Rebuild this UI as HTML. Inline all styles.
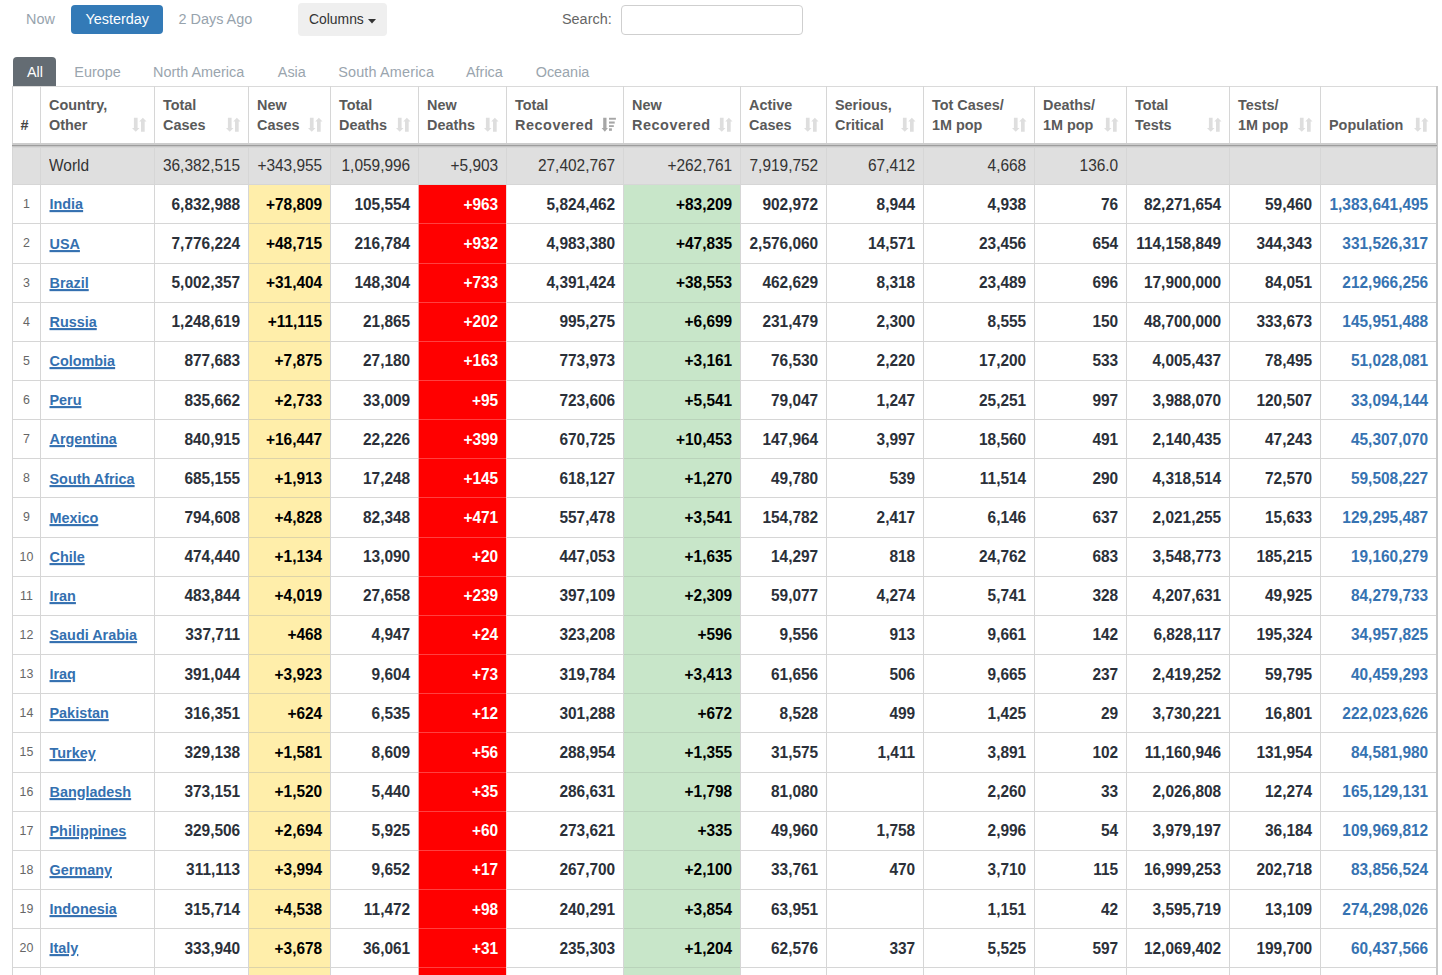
<!DOCTYPE html>
<html><head><meta charset="utf-8"><title>Coronavirus table</title>
<style>
html,body{margin:0;padding:0;background:#fff;}
body{width:1442px;height:975px;overflow:hidden;position:relative;font-family:"Liberation Sans",sans-serif;color:#333;}
.a{position:absolute;white-space:nowrap;line-height:1;}
.t{font-size:14.42px;}
.h{font-size:14.42px;font-weight:bold;color:#5a5a5a;}
.c{font-size:15.45px;font-weight:bold;color:#2b3039;transform:scaleY(1.1);transform-origin:0 85%;}
.w{font-size:15.45px;color:#333;transform:scaleY(1.1);transform-origin:0 85%;}
.n{font-size:12.4px;color:#666;}
.lk{transform:scaleY(1.06) !important;color:#3470b0;font-size:14.42px;text-decoration:underline;text-decoration-thickness:2px;text-underline-offset:1px;}
.pop{color:#3673b2;}
.k{color:#000;}
.wh{color:#fff;}
.ln{position:absolute;background:#d6d6d6;}
.bg{position:absolute;}
</style></head><body>

<div class="a t" style="left:26px;top:12.4px;color:#97a3ad;">Now</div>
<div class="bg" style="left:71px;top:5px;width:92px;height:29px;background:#337ab7;border-radius:4px;"></div>
<div class="a t" style="left:85.5px;top:12.4px;color:#fff;">Yesterday</div>
<div class="a t" style="left:178.5px;top:12.4px;color:#97a3ad;">2 Days Ago</div>
<div class="bg" style="left:298px;top:3px;width:88.5px;height:33px;background:#efefef;border-radius:4px;"></div>
<div class="a" style="left:309px;top:13.1px;color:#333;font-size:13.9px;">Columns</div>
<svg class="bg" style="left:368px;top:18.5px" width="8" height="5" viewBox="0 0 8 5"><path d="M0 0H8L4 4.5Z" fill="#333"/></svg>
<div class="a t" style="left:562px;top:11.8px;color:#666;">Search:</div>
<div class="bg" style="left:621px;top:5px;width:180px;height:28px;border:1px solid #cfcfcf;border-radius:4px;"></div>
<div class="bg" style="left:13px;top:57px;width:43px;height:30px;background:#646c73;border-radius:4px 4px 0 0;"></div>
<div class="a t" style="left:27px;top:64.7px;color:#fff;">All</div>
<div class="a t" style="left:74.3px;top:64.7px;color:#9aa5ae;">Europe</div>
<div class="a t" style="left:153px;top:64.7px;color:#9aa5ae;">North America</div>
<div class="a t" style="left:277.8px;top:64.7px;color:#9aa5ae;">Asia</div>
<div class="a t" style="left:338.2px;top:64.7px;color:#9aa5ae;letter-spacing:0.17px;">South America</div>
<div class="a t" style="left:466px;top:64.7px;color:#9aa5ae;">Africa</div>
<div class="a t" style="left:535.7px;top:64.7px;color:#9aa5ae;">Oceania</div>
<div class="bg" style="left:12px;top:145.2px;width:1425px;height:39.0px;background:#dfdfdf;"></div>
<div class="bg" style="left:249px;top:185.2px;width:81px;height:790.8px;background:#ffeeaa;"></div>
<div class="bg" style="left:419px;top:185.2px;width:87px;height:790.8px;background:#ff0000;"></div>
<div class="bg" style="left:624px;top:185.2px;width:116px;height:790.8px;background:#c8e6c9;"></div>
<div class="ln" style="left:12px;top:86px;width:1425px;height:1px;background:#dadada;"></div>
<div class="ln" style="left:12px;top:184.20px;width:1425px;height:1px;"></div>
<div class="ln" style="left:12px;top:223.36px;width:1425px;height:1px;"></div>
<div class="ln" style="left:12px;top:262.52px;width:1425px;height:1px;"></div>
<div class="ln" style="left:12px;top:301.68px;width:1425px;height:1px;"></div>
<div class="ln" style="left:12px;top:340.84px;width:1425px;height:1px;"></div>
<div class="ln" style="left:12px;top:380.00px;width:1425px;height:1px;"></div>
<div class="ln" style="left:12px;top:419.16px;width:1425px;height:1px;"></div>
<div class="ln" style="left:12px;top:458.32px;width:1425px;height:1px;"></div>
<div class="ln" style="left:12px;top:497.48px;width:1425px;height:1px;"></div>
<div class="ln" style="left:12px;top:536.64px;width:1425px;height:1px;"></div>
<div class="ln" style="left:12px;top:575.80px;width:1425px;height:1px;"></div>
<div class="ln" style="left:12px;top:614.96px;width:1425px;height:1px;"></div>
<div class="ln" style="left:12px;top:654.12px;width:1425px;height:1px;"></div>
<div class="ln" style="left:12px;top:693.28px;width:1425px;height:1px;"></div>
<div class="ln" style="left:12px;top:732.44px;width:1425px;height:1px;"></div>
<div class="ln" style="left:12px;top:771.60px;width:1425px;height:1px;"></div>
<div class="ln" style="left:12px;top:810.76px;width:1425px;height:1px;"></div>
<div class="ln" style="left:12px;top:849.92px;width:1425px;height:1px;"></div>
<div class="ln" style="left:12px;top:889.08px;width:1425px;height:1px;"></div>
<div class="ln" style="left:12px;top:928.24px;width:1425px;height:1px;"></div>
<div class="ln" style="left:12px;top:967.40px;width:1425px;height:1px;"></div>
<div class="ln" style="left:249px;top:223.36px;width:81px;height:1px;background:#ddd3a8;"></div>
<div class="ln" style="left:249px;top:262.52px;width:81px;height:1px;background:#ddd3a8;"></div>
<div class="ln" style="left:249px;top:301.68px;width:81px;height:1px;background:#ddd3a8;"></div>
<div class="ln" style="left:249px;top:340.84px;width:81px;height:1px;background:#ddd3a8;"></div>
<div class="ln" style="left:249px;top:380.00px;width:81px;height:1px;background:#ddd3a8;"></div>
<div class="ln" style="left:249px;top:419.16px;width:81px;height:1px;background:#ddd3a8;"></div>
<div class="ln" style="left:249px;top:458.32px;width:81px;height:1px;background:#ddd3a8;"></div>
<div class="ln" style="left:249px;top:497.48px;width:81px;height:1px;background:#ddd3a8;"></div>
<div class="ln" style="left:249px;top:536.64px;width:81px;height:1px;background:#ddd3a8;"></div>
<div class="ln" style="left:249px;top:575.80px;width:81px;height:1px;background:#ddd3a8;"></div>
<div class="ln" style="left:249px;top:614.96px;width:81px;height:1px;background:#ddd3a8;"></div>
<div class="ln" style="left:249px;top:654.12px;width:81px;height:1px;background:#ddd3a8;"></div>
<div class="ln" style="left:249px;top:693.28px;width:81px;height:1px;background:#ddd3a8;"></div>
<div class="ln" style="left:249px;top:732.44px;width:81px;height:1px;background:#ddd3a8;"></div>
<div class="ln" style="left:249px;top:771.60px;width:81px;height:1px;background:#ddd3a8;"></div>
<div class="ln" style="left:249px;top:810.76px;width:81px;height:1px;background:#ddd3a8;"></div>
<div class="ln" style="left:249px;top:849.92px;width:81px;height:1px;background:#ddd3a8;"></div>
<div class="ln" style="left:249px;top:889.08px;width:81px;height:1px;background:#ddd3a8;"></div>
<div class="ln" style="left:249px;top:928.24px;width:81px;height:1px;background:#ddd3a8;"></div>
<div class="ln" style="left:249px;top:967.40px;width:81px;height:1px;background:#ddd3a8;"></div>
<div class="ln" style="left:624px;top:223.36px;width:116px;height:1px;background:#b9d3ba;"></div>
<div class="ln" style="left:624px;top:262.52px;width:116px;height:1px;background:#b9d3ba;"></div>
<div class="ln" style="left:624px;top:301.68px;width:116px;height:1px;background:#b9d3ba;"></div>
<div class="ln" style="left:624px;top:340.84px;width:116px;height:1px;background:#b9d3ba;"></div>
<div class="ln" style="left:624px;top:380.00px;width:116px;height:1px;background:#b9d3ba;"></div>
<div class="ln" style="left:624px;top:419.16px;width:116px;height:1px;background:#b9d3ba;"></div>
<div class="ln" style="left:624px;top:458.32px;width:116px;height:1px;background:#b9d3ba;"></div>
<div class="ln" style="left:624px;top:497.48px;width:116px;height:1px;background:#b9d3ba;"></div>
<div class="ln" style="left:624px;top:536.64px;width:116px;height:1px;background:#b9d3ba;"></div>
<div class="ln" style="left:624px;top:575.80px;width:116px;height:1px;background:#b9d3ba;"></div>
<div class="ln" style="left:624px;top:614.96px;width:116px;height:1px;background:#b9d3ba;"></div>
<div class="ln" style="left:624px;top:654.12px;width:116px;height:1px;background:#b9d3ba;"></div>
<div class="ln" style="left:624px;top:693.28px;width:116px;height:1px;background:#b9d3ba;"></div>
<div class="ln" style="left:624px;top:732.44px;width:116px;height:1px;background:#b9d3ba;"></div>
<div class="ln" style="left:624px;top:771.60px;width:116px;height:1px;background:#b9d3ba;"></div>
<div class="ln" style="left:624px;top:810.76px;width:116px;height:1px;background:#b9d3ba;"></div>
<div class="ln" style="left:624px;top:849.92px;width:116px;height:1px;background:#b9d3ba;"></div>
<div class="ln" style="left:624px;top:889.08px;width:116px;height:1px;background:#b9d3ba;"></div>
<div class="ln" style="left:624px;top:928.24px;width:116px;height:1px;background:#b9d3ba;"></div>
<div class="ln" style="left:624px;top:967.40px;width:116px;height:1px;background:#b9d3ba;"></div>
<div class="ln" style="left:12px;top:86px;width:1px;height:889px;"></div>
<div class="ln" style="left:40px;top:86px;width:1px;height:889px;"></div>
<div class="ln" style="left:154px;top:86px;width:1px;height:889px;"></div>
<div class="ln" style="left:248px;top:86px;width:1px;height:889px;"></div>
<div class="ln" style="left:330px;top:86px;width:1px;height:889px;"></div>
<div class="ln" style="left:418px;top:86px;width:1px;height:889px;"></div>
<div class="ln" style="left:506px;top:86px;width:1px;height:889px;"></div>
<div class="ln" style="left:623px;top:86px;width:1px;height:889px;"></div>
<div class="ln" style="left:740px;top:86px;width:1px;height:889px;"></div>
<div class="ln" style="left:826px;top:86px;width:1px;height:889px;"></div>
<div class="ln" style="left:923px;top:86px;width:1px;height:889px;"></div>
<div class="ln" style="left:1034px;top:86px;width:1px;height:889px;"></div>
<div class="ln" style="left:1126px;top:86px;width:1px;height:889px;"></div>
<div class="ln" style="left:1229px;top:86px;width:1px;height:889px;"></div>
<div class="ln" style="left:1320px;top:86px;width:1px;height:889px;"></div>
<div class="ln" style="left:1436px;top:86px;width:1px;height:889px;"></div>
<div class="ln" style="left:1436px;top:86px;width:2px;height:889px;background:#c8c8c8;"></div>
<div class="ln" style="left:12px;top:143px;width:1425px;height:2px;background:#cccccc;"></div>
<div class="ln" style="left:12px;top:145px;width:1425px;height:1px;background:#9d9d9d;"></div>
<div class="ln" style="left:12px;top:146px;width:1425px;height:1px;background:#c6c6c6;"></div>
<div class="ln" style="left:12px;top:147px;width:1425px;height:1px;background:#d6d6d6;"></div>
<div class="bg" style="left:418px;top:185.2px;width:1px;height:790.8px;background:#f6a8a8;"></div>
<div class="bg" style="left:419px;top:185.2px;width:87px;height:790.8px;background:#ff0000;"></div>
<div class="bg" style="left:506px;top:185.2px;width:1px;height:790.8px;background:#f3dede;"></div>
<div class="ln" style="left:419px;top:223.36px;width:87px;height:1px;background:#ff4040;"></div>
<div class="ln" style="left:419px;top:262.52px;width:87px;height:1px;background:#ff4040;"></div>
<div class="ln" style="left:419px;top:301.68px;width:87px;height:1px;background:#ff4040;"></div>
<div class="ln" style="left:419px;top:340.84px;width:87px;height:1px;background:#ff4040;"></div>
<div class="ln" style="left:419px;top:380.00px;width:87px;height:1px;background:#ff4040;"></div>
<div class="ln" style="left:419px;top:419.16px;width:87px;height:1px;background:#ff4040;"></div>
<div class="ln" style="left:419px;top:458.32px;width:87px;height:1px;background:#ff4040;"></div>
<div class="ln" style="left:419px;top:497.48px;width:87px;height:1px;background:#ff4040;"></div>
<div class="ln" style="left:419px;top:536.64px;width:87px;height:1px;background:#ff4040;"></div>
<div class="ln" style="left:419px;top:575.80px;width:87px;height:1px;background:#ff4040;"></div>
<div class="ln" style="left:419px;top:614.96px;width:87px;height:1px;background:#ff4040;"></div>
<div class="ln" style="left:419px;top:654.12px;width:87px;height:1px;background:#ff4040;"></div>
<div class="ln" style="left:419px;top:693.28px;width:87px;height:1px;background:#ff4040;"></div>
<div class="ln" style="left:419px;top:732.44px;width:87px;height:1px;background:#ff4040;"></div>
<div class="ln" style="left:419px;top:771.60px;width:87px;height:1px;background:#ff4040;"></div>
<div class="ln" style="left:419px;top:810.76px;width:87px;height:1px;background:#ff4040;"></div>
<div class="ln" style="left:419px;top:849.92px;width:87px;height:1px;background:#ff4040;"></div>
<div class="ln" style="left:419px;top:889.08px;width:87px;height:1px;background:#ff4040;"></div>
<div class="ln" style="left:419px;top:928.24px;width:87px;height:1px;background:#ff4040;"></div>
<div class="ln" style="left:419px;top:967.40px;width:87px;height:1px;background:#ff4040;"></div>
<div class="a h" style="left:20.5px;top:118.39px;color:#444;">#</div>
<div class="a h" style="left:49px;top:98.19px;">Country,</div>
<div class="a h" style="left:49px;top:118.39px;">Other</div>
<svg class="bg" style="left:131px;top:117px" width="16" height="16" viewBox="0 0 16 16"><g fill="#dedede"><path d="M2.9 0.8H6.6V11H8.5L4.75 14.7L1 11H2.9Z"/><path d="M10 14.7H13.7V4.5H15.5L11.85 0.8L8.2 4.5H10Z"/></g></svg>
<div class="a h" style="left:163px;top:98.19px;">Total</div>
<div class="a h" style="left:163px;top:118.39px;">Cases</div>
<svg class="bg" style="left:225px;top:117px" width="16" height="16" viewBox="0 0 16 16"><g fill="#dedede"><path d="M2.9 0.8H6.6V11H8.5L4.75 14.7L1 11H2.9Z"/><path d="M10 14.7H13.7V4.5H15.5L11.85 0.8L8.2 4.5H10Z"/></g></svg>
<div class="a h" style="left:257px;top:98.19px;">New</div>
<div class="a h" style="left:257px;top:118.39px;">Cases</div>
<svg class="bg" style="left:307px;top:117px" width="16" height="16" viewBox="0 0 16 16"><g fill="#dedede"><path d="M2.9 0.8H6.6V11H8.5L4.75 14.7L1 11H2.9Z"/><path d="M10 14.7H13.7V4.5H15.5L11.85 0.8L8.2 4.5H10Z"/></g></svg>
<div class="a h" style="left:339px;top:98.19px;">Total</div>
<div class="a h" style="left:339px;top:118.39px;">Deaths</div>
<svg class="bg" style="left:395px;top:117px" width="16" height="16" viewBox="0 0 16 16"><g fill="#dedede"><path d="M2.9 0.8H6.6V11H8.5L4.75 14.7L1 11H2.9Z"/><path d="M10 14.7H13.7V4.5H15.5L11.85 0.8L8.2 4.5H10Z"/></g></svg>
<div class="a h" style="left:427px;top:98.19px;">New</div>
<div class="a h" style="left:427px;top:118.39px;">Deaths</div>
<svg class="bg" style="left:483px;top:117px" width="16" height="16" viewBox="0 0 16 16"><g fill="#dedede"><path d="M2.9 0.8H6.6V11H8.5L4.75 14.7L1 11H2.9Z"/><path d="M10 14.7H13.7V4.5H15.5L11.85 0.8L8.2 4.5H10Z"/></g></svg>
<div class="a h" style="left:515px;top:98.19px;">Total</div>
<div class="a h" style="left:515px;top:118.39px;letter-spacing:0.55px;">Recovered</div>
<svg class="bg" style="left:601px;top:117px" width="16" height="16" viewBox="0 0 16 16"><g fill="#a6a6a6"><path d="M2.2 0.8H5.5V11H6.9L3.85 14.7L0.6 11H2.2Z"/><rect x="8" y="0.8" width="6.9" height="1.9"/><rect x="8" y="4.5" width="5.7" height="2.1"/><rect x="8" y="8.2" width="4.8" height="1.8"/><rect x="8" y="11.3" width="2.9" height="2.5"/></g></svg>
<div class="a h" style="left:632px;top:98.19px;">New</div>
<div class="a h" style="left:632px;top:118.39px;letter-spacing:0.55px;">Recovered</div>
<svg class="bg" style="left:717px;top:117px" width="16" height="16" viewBox="0 0 16 16"><g fill="#dedede"><path d="M2.9 0.8H6.6V11H8.5L4.75 14.7L1 11H2.9Z"/><path d="M10 14.7H13.7V4.5H15.5L11.85 0.8L8.2 4.5H10Z"/></g></svg>
<div class="a h" style="left:749px;top:98.19px;">Active</div>
<div class="a h" style="left:749px;top:118.39px;">Cases</div>
<svg class="bg" style="left:803px;top:117px" width="16" height="16" viewBox="0 0 16 16"><g fill="#dedede"><path d="M2.9 0.8H6.6V11H8.5L4.75 14.7L1 11H2.9Z"/><path d="M10 14.7H13.7V4.5H15.5L11.85 0.8L8.2 4.5H10Z"/></g></svg>
<div class="a h" style="left:835px;top:98.19px;">Serious,</div>
<div class="a h" style="left:835px;top:118.39px;">Critical</div>
<svg class="bg" style="left:900px;top:117px" width="16" height="16" viewBox="0 0 16 16"><g fill="#dedede"><path d="M2.9 0.8H6.6V11H8.5L4.75 14.7L1 11H2.9Z"/><path d="M10 14.7H13.7V4.5H15.5L11.85 0.8L8.2 4.5H10Z"/></g></svg>
<div class="a h" style="left:932px;top:98.19px;">Tot Cases/</div>
<div class="a h" style="left:932px;top:118.39px;">1M pop</div>
<svg class="bg" style="left:1011px;top:117px" width="16" height="16" viewBox="0 0 16 16"><g fill="#dedede"><path d="M2.9 0.8H6.6V11H8.5L4.75 14.7L1 11H2.9Z"/><path d="M10 14.7H13.7V4.5H15.5L11.85 0.8L8.2 4.5H10Z"/></g></svg>
<div class="a h" style="left:1043px;top:98.19px;">Deaths/</div>
<div class="a h" style="left:1043px;top:118.39px;">1M pop</div>
<svg class="bg" style="left:1103px;top:117px" width="16" height="16" viewBox="0 0 16 16"><g fill="#dedede"><path d="M2.9 0.8H6.6V11H8.5L4.75 14.7L1 11H2.9Z"/><path d="M10 14.7H13.7V4.5H15.5L11.85 0.8L8.2 4.5H10Z"/></g></svg>
<div class="a h" style="left:1135px;top:98.19px;">Total</div>
<div class="a h" style="left:1135px;top:118.39px;">Tests</div>
<svg class="bg" style="left:1206px;top:117px" width="16" height="16" viewBox="0 0 16 16"><g fill="#dedede"><path d="M2.9 0.8H6.6V11H8.5L4.75 14.7L1 11H2.9Z"/><path d="M10 14.7H13.7V4.5H15.5L11.85 0.8L8.2 4.5H10Z"/></g></svg>
<div class="a h" style="left:1238px;top:98.19px;">Tests/</div>
<div class="a h" style="left:1238px;top:118.39px;">1M pop</div>
<svg class="bg" style="left:1297px;top:117px" width="16" height="16" viewBox="0 0 16 16"><g fill="#dedede"><path d="M2.9 0.8H6.6V11H8.5L4.75 14.7L1 11H2.9Z"/><path d="M10 14.7H13.7V4.5H15.5L11.85 0.8L8.2 4.5H10Z"/></g></svg>
<div class="a h" style="left:1329px;top:118.39px;">Population</div>
<svg class="bg" style="left:1413px;top:117px" width="16" height="16" viewBox="0 0 16 16"><g fill="#dedede"><path d="M2.9 0.8H6.6V11H8.5L4.75 14.7L1 11H2.9Z"/><path d="M10 14.7H13.7V4.5H15.5L11.85 0.8L8.2 4.5H10Z"/></g></svg>
<div class="a w" style="left:49px;top:157.92px;">World</div>
<div class="a w" style="right:1201.8px;top:157.92px;">36,382,515</div>
<div class="a w" style="right:1119.8px;top:157.92px;">+343,955</div>
<div class="a w" style="right:1031.8px;top:157.92px;">1,059,996</div>
<div class="a w" style="right:943.8px;top:157.92px;">+5,903</div>
<div class="a w" style="right:826.8px;top:157.92px;">27,402,767</div>
<div class="a w" style="right:709.8px;top:157.92px;">+262,761</div>
<div class="a w" style="right:623.8px;top:157.92px;">7,919,752</div>
<div class="a w" style="right:526.8px;top:157.92px;">67,412</div>
<div class="a w" style="right:415.8px;top:157.92px;">4,668</div>
<div class="a w" style="right:323.8px;top:157.92px;">136.0</div>
<div class="a n" style="left:0;width:53px;text-align:center;top:198.20px;">1</div>
<div class="a c lk" style="left:49.5px;top:197.39px;">India</div>
<div class="a c" style="right:1201.8px;top:196.72px;">6,832,988</div>
<div class="a c k" style="right:1119.8px;top:196.72px;">+78,809</div>
<div class="a c" style="right:1031.8px;top:196.72px;">105,554</div>
<div class="a c wh" style="right:943.8px;top:196.72px;">+963</div>
<div class="a c" style="right:826.8px;top:196.72px;">5,824,462</div>
<div class="a c k" style="right:709.8px;top:196.72px;">+83,209</div>
<div class="a c" style="right:623.8px;top:196.72px;">902,972</div>
<div class="a c" style="right:526.8px;top:196.72px;">8,944</div>
<div class="a c" style="right:415.8px;top:196.72px;">4,938</div>
<div class="a c" style="right:323.8px;top:196.72px;">76</div>
<div class="a c" style="right:220.8px;top:196.72px;">82,271,654</div>
<div class="a c" style="right:129.8px;top:196.72px;">59,460</div>
<div class="a c pop" style="right:13.8px;top:196.72px;">1,383,641,495</div>
<div class="a n" style="left:0;width:53px;text-align:center;top:237.36px;">2</div>
<div class="a c lk" style="left:49.5px;top:236.55px;">USA</div>
<div class="a c" style="right:1201.8px;top:235.88px;">7,776,224</div>
<div class="a c k" style="right:1119.8px;top:235.88px;">+48,715</div>
<div class="a c" style="right:1031.8px;top:235.88px;">216,784</div>
<div class="a c wh" style="right:943.8px;top:235.88px;">+932</div>
<div class="a c" style="right:826.8px;top:235.88px;">4,983,380</div>
<div class="a c k" style="right:709.8px;top:235.88px;">+47,835</div>
<div class="a c" style="right:623.8px;top:235.88px;">2,576,060</div>
<div class="a c" style="right:526.8px;top:235.88px;">14,571</div>
<div class="a c" style="right:415.8px;top:235.88px;">23,456</div>
<div class="a c" style="right:323.8px;top:235.88px;">654</div>
<div class="a c" style="right:220.8px;top:235.88px;">114,158,849</div>
<div class="a c" style="right:129.8px;top:235.88px;">344,343</div>
<div class="a c pop" style="right:13.8px;top:235.88px;">331,526,317</div>
<div class="a n" style="left:0;width:53px;text-align:center;top:276.52px;">3</div>
<div class="a c lk" style="left:49.5px;top:275.71px;">Brazil</div>
<div class="a c" style="right:1201.8px;top:275.04px;">5,002,357</div>
<div class="a c k" style="right:1119.8px;top:275.04px;">+31,404</div>
<div class="a c" style="right:1031.8px;top:275.04px;">148,304</div>
<div class="a c wh" style="right:943.8px;top:275.04px;">+733</div>
<div class="a c" style="right:826.8px;top:275.04px;">4,391,424</div>
<div class="a c k" style="right:709.8px;top:275.04px;">+38,553</div>
<div class="a c" style="right:623.8px;top:275.04px;">462,629</div>
<div class="a c" style="right:526.8px;top:275.04px;">8,318</div>
<div class="a c" style="right:415.8px;top:275.04px;">23,489</div>
<div class="a c" style="right:323.8px;top:275.04px;">696</div>
<div class="a c" style="right:220.8px;top:275.04px;">17,900,000</div>
<div class="a c" style="right:129.8px;top:275.04px;">84,051</div>
<div class="a c pop" style="right:13.8px;top:275.04px;">212,966,256</div>
<div class="a n" style="left:0;width:53px;text-align:center;top:315.68px;">4</div>
<div class="a c lk" style="left:49.5px;top:314.87px;">Russia</div>
<div class="a c" style="right:1201.8px;top:314.20px;">1,248,619</div>
<div class="a c k" style="right:1119.8px;top:314.20px;">+11,115</div>
<div class="a c" style="right:1031.8px;top:314.20px;">21,865</div>
<div class="a c wh" style="right:943.8px;top:314.20px;">+202</div>
<div class="a c" style="right:826.8px;top:314.20px;">995,275</div>
<div class="a c k" style="right:709.8px;top:314.20px;">+6,699</div>
<div class="a c" style="right:623.8px;top:314.20px;">231,479</div>
<div class="a c" style="right:526.8px;top:314.20px;">2,300</div>
<div class="a c" style="right:415.8px;top:314.20px;">8,555</div>
<div class="a c" style="right:323.8px;top:314.20px;">150</div>
<div class="a c" style="right:220.8px;top:314.20px;">48,700,000</div>
<div class="a c" style="right:129.8px;top:314.20px;">333,673</div>
<div class="a c pop" style="right:13.8px;top:314.20px;">145,951,488</div>
<div class="a n" style="left:0;width:53px;text-align:center;top:354.84px;">5</div>
<div class="a c lk" style="left:49.5px;top:354.03px;">Colombia</div>
<div class="a c" style="right:1201.8px;top:353.36px;">877,683</div>
<div class="a c k" style="right:1119.8px;top:353.36px;">+7,875</div>
<div class="a c" style="right:1031.8px;top:353.36px;">27,180</div>
<div class="a c wh" style="right:943.8px;top:353.36px;">+163</div>
<div class="a c" style="right:826.8px;top:353.36px;">773,973</div>
<div class="a c k" style="right:709.8px;top:353.36px;">+3,161</div>
<div class="a c" style="right:623.8px;top:353.36px;">76,530</div>
<div class="a c" style="right:526.8px;top:353.36px;">2,220</div>
<div class="a c" style="right:415.8px;top:353.36px;">17,200</div>
<div class="a c" style="right:323.8px;top:353.36px;">533</div>
<div class="a c" style="right:220.8px;top:353.36px;">4,005,437</div>
<div class="a c" style="right:129.8px;top:353.36px;">78,495</div>
<div class="a c pop" style="right:13.8px;top:353.36px;">51,028,081</div>
<div class="a n" style="left:0;width:53px;text-align:center;top:394.00px;">6</div>
<div class="a c lk" style="left:49.5px;top:393.19px;">Peru</div>
<div class="a c" style="right:1201.8px;top:392.52px;">835,662</div>
<div class="a c k" style="right:1119.8px;top:392.52px;">+2,733</div>
<div class="a c" style="right:1031.8px;top:392.52px;">33,009</div>
<div class="a c wh" style="right:943.8px;top:392.52px;">+95</div>
<div class="a c" style="right:826.8px;top:392.52px;">723,606</div>
<div class="a c k" style="right:709.8px;top:392.52px;">+5,541</div>
<div class="a c" style="right:623.8px;top:392.52px;">79,047</div>
<div class="a c" style="right:526.8px;top:392.52px;">1,247</div>
<div class="a c" style="right:415.8px;top:392.52px;">25,251</div>
<div class="a c" style="right:323.8px;top:392.52px;">997</div>
<div class="a c" style="right:220.8px;top:392.52px;">3,988,070</div>
<div class="a c" style="right:129.8px;top:392.52px;">120,507</div>
<div class="a c pop" style="right:13.8px;top:392.52px;">33,094,144</div>
<div class="a n" style="left:0;width:53px;text-align:center;top:433.16px;">7</div>
<div class="a c lk" style="left:49.5px;top:432.35px;">Argentina</div>
<div class="a c" style="right:1201.8px;top:431.68px;">840,915</div>
<div class="a c k" style="right:1119.8px;top:431.68px;">+16,447</div>
<div class="a c" style="right:1031.8px;top:431.68px;">22,226</div>
<div class="a c wh" style="right:943.8px;top:431.68px;">+399</div>
<div class="a c" style="right:826.8px;top:431.68px;">670,725</div>
<div class="a c k" style="right:709.8px;top:431.68px;">+10,453</div>
<div class="a c" style="right:623.8px;top:431.68px;">147,964</div>
<div class="a c" style="right:526.8px;top:431.68px;">3,997</div>
<div class="a c" style="right:415.8px;top:431.68px;">18,560</div>
<div class="a c" style="right:323.8px;top:431.68px;">491</div>
<div class="a c" style="right:220.8px;top:431.68px;">2,140,435</div>
<div class="a c" style="right:129.8px;top:431.68px;">47,243</div>
<div class="a c pop" style="right:13.8px;top:431.68px;">45,307,070</div>
<div class="a n" style="left:0;width:53px;text-align:center;top:472.32px;">8</div>
<div class="a c lk" style="left:49.5px;top:471.51px;">South Africa</div>
<div class="a c" style="right:1201.8px;top:470.84px;">685,155</div>
<div class="a c k" style="right:1119.8px;top:470.84px;">+1,913</div>
<div class="a c" style="right:1031.8px;top:470.84px;">17,248</div>
<div class="a c wh" style="right:943.8px;top:470.84px;">+145</div>
<div class="a c" style="right:826.8px;top:470.84px;">618,127</div>
<div class="a c k" style="right:709.8px;top:470.84px;">+1,270</div>
<div class="a c" style="right:623.8px;top:470.84px;">49,780</div>
<div class="a c" style="right:526.8px;top:470.84px;">539</div>
<div class="a c" style="right:415.8px;top:470.84px;">11,514</div>
<div class="a c" style="right:323.8px;top:470.84px;">290</div>
<div class="a c" style="right:220.8px;top:470.84px;">4,318,514</div>
<div class="a c" style="right:129.8px;top:470.84px;">72,570</div>
<div class="a c pop" style="right:13.8px;top:470.84px;">59,508,227</div>
<div class="a n" style="left:0;width:53px;text-align:center;top:511.48px;">9</div>
<div class="a c lk" style="left:49.5px;top:510.67px;">Mexico</div>
<div class="a c" style="right:1201.8px;top:510.00px;">794,608</div>
<div class="a c k" style="right:1119.8px;top:510.00px;">+4,828</div>
<div class="a c" style="right:1031.8px;top:510.00px;">82,348</div>
<div class="a c wh" style="right:943.8px;top:510.00px;">+471</div>
<div class="a c" style="right:826.8px;top:510.00px;">557,478</div>
<div class="a c k" style="right:709.8px;top:510.00px;">+3,541</div>
<div class="a c" style="right:623.8px;top:510.00px;">154,782</div>
<div class="a c" style="right:526.8px;top:510.00px;">2,417</div>
<div class="a c" style="right:415.8px;top:510.00px;">6,146</div>
<div class="a c" style="right:323.8px;top:510.00px;">637</div>
<div class="a c" style="right:220.8px;top:510.00px;">2,021,255</div>
<div class="a c" style="right:129.8px;top:510.00px;">15,633</div>
<div class="a c pop" style="right:13.8px;top:510.00px;">129,295,487</div>
<div class="a n" style="left:0;width:53px;text-align:center;top:550.64px;">10</div>
<div class="a c lk" style="left:49.5px;top:549.83px;">Chile</div>
<div class="a c" style="right:1201.8px;top:549.16px;">474,440</div>
<div class="a c k" style="right:1119.8px;top:549.16px;">+1,134</div>
<div class="a c" style="right:1031.8px;top:549.16px;">13,090</div>
<div class="a c wh" style="right:943.8px;top:549.16px;">+20</div>
<div class="a c" style="right:826.8px;top:549.16px;">447,053</div>
<div class="a c k" style="right:709.8px;top:549.16px;">+1,635</div>
<div class="a c" style="right:623.8px;top:549.16px;">14,297</div>
<div class="a c" style="right:526.8px;top:549.16px;">818</div>
<div class="a c" style="right:415.8px;top:549.16px;">24,762</div>
<div class="a c" style="right:323.8px;top:549.16px;">683</div>
<div class="a c" style="right:220.8px;top:549.16px;">3,548,773</div>
<div class="a c" style="right:129.8px;top:549.16px;">185,215</div>
<div class="a c pop" style="right:13.8px;top:549.16px;">19,160,279</div>
<div class="a n" style="left:0;width:53px;text-align:center;top:589.80px;">11</div>
<div class="a c lk" style="left:49.5px;top:588.99px;">Iran</div>
<div class="a c" style="right:1201.8px;top:588.32px;">483,844</div>
<div class="a c k" style="right:1119.8px;top:588.32px;">+4,019</div>
<div class="a c" style="right:1031.8px;top:588.32px;">27,658</div>
<div class="a c wh" style="right:943.8px;top:588.32px;">+239</div>
<div class="a c" style="right:826.8px;top:588.32px;">397,109</div>
<div class="a c k" style="right:709.8px;top:588.32px;">+2,309</div>
<div class="a c" style="right:623.8px;top:588.32px;">59,077</div>
<div class="a c" style="right:526.8px;top:588.32px;">4,274</div>
<div class="a c" style="right:415.8px;top:588.32px;">5,741</div>
<div class="a c" style="right:323.8px;top:588.32px;">328</div>
<div class="a c" style="right:220.8px;top:588.32px;">4,207,631</div>
<div class="a c" style="right:129.8px;top:588.32px;">49,925</div>
<div class="a c pop" style="right:13.8px;top:588.32px;">84,279,733</div>
<div class="a n" style="left:0;width:53px;text-align:center;top:628.96px;">12</div>
<div class="a c lk" style="left:49.5px;top:628.15px;">Saudi Arabia</div>
<div class="a c" style="right:1201.8px;top:627.48px;">337,711</div>
<div class="a c k" style="right:1119.8px;top:627.48px;">+468</div>
<div class="a c" style="right:1031.8px;top:627.48px;">4,947</div>
<div class="a c wh" style="right:943.8px;top:627.48px;">+24</div>
<div class="a c" style="right:826.8px;top:627.48px;">323,208</div>
<div class="a c k" style="right:709.8px;top:627.48px;">+596</div>
<div class="a c" style="right:623.8px;top:627.48px;">9,556</div>
<div class="a c" style="right:526.8px;top:627.48px;">913</div>
<div class="a c" style="right:415.8px;top:627.48px;">9,661</div>
<div class="a c" style="right:323.8px;top:627.48px;">142</div>
<div class="a c" style="right:220.8px;top:627.48px;">6,828,117</div>
<div class="a c" style="right:129.8px;top:627.48px;">195,324</div>
<div class="a c pop" style="right:13.8px;top:627.48px;">34,957,825</div>
<div class="a n" style="left:0;width:53px;text-align:center;top:668.12px;">13</div>
<div class="a c lk" style="left:49.5px;top:667.31px;">Iraq</div>
<div class="a c" style="right:1201.8px;top:666.64px;">391,044</div>
<div class="a c k" style="right:1119.8px;top:666.64px;">+3,923</div>
<div class="a c" style="right:1031.8px;top:666.64px;">9,604</div>
<div class="a c wh" style="right:943.8px;top:666.64px;">+73</div>
<div class="a c" style="right:826.8px;top:666.64px;">319,784</div>
<div class="a c k" style="right:709.8px;top:666.64px;">+3,413</div>
<div class="a c" style="right:623.8px;top:666.64px;">61,656</div>
<div class="a c" style="right:526.8px;top:666.64px;">506</div>
<div class="a c" style="right:415.8px;top:666.64px;">9,665</div>
<div class="a c" style="right:323.8px;top:666.64px;">237</div>
<div class="a c" style="right:220.8px;top:666.64px;">2,419,252</div>
<div class="a c" style="right:129.8px;top:666.64px;">59,795</div>
<div class="a c pop" style="right:13.8px;top:666.64px;">40,459,293</div>
<div class="a n" style="left:0;width:53px;text-align:center;top:707.28px;">14</div>
<div class="a c lk" style="left:49.5px;top:706.47px;">Pakistan</div>
<div class="a c" style="right:1201.8px;top:705.80px;">316,351</div>
<div class="a c k" style="right:1119.8px;top:705.80px;">+624</div>
<div class="a c" style="right:1031.8px;top:705.80px;">6,535</div>
<div class="a c wh" style="right:943.8px;top:705.80px;">+12</div>
<div class="a c" style="right:826.8px;top:705.80px;">301,288</div>
<div class="a c k" style="right:709.8px;top:705.80px;">+672</div>
<div class="a c" style="right:623.8px;top:705.80px;">8,528</div>
<div class="a c" style="right:526.8px;top:705.80px;">499</div>
<div class="a c" style="right:415.8px;top:705.80px;">1,425</div>
<div class="a c" style="right:323.8px;top:705.80px;">29</div>
<div class="a c" style="right:220.8px;top:705.80px;">3,730,221</div>
<div class="a c" style="right:129.8px;top:705.80px;">16,801</div>
<div class="a c pop" style="right:13.8px;top:705.80px;">222,023,626</div>
<div class="a n" style="left:0;width:53px;text-align:center;top:746.44px;">15</div>
<div class="a c lk" style="left:49.5px;top:745.63px;">Turkey</div>
<div class="a c" style="right:1201.8px;top:744.96px;">329,138</div>
<div class="a c k" style="right:1119.8px;top:744.96px;">+1,581</div>
<div class="a c" style="right:1031.8px;top:744.96px;">8,609</div>
<div class="a c wh" style="right:943.8px;top:744.96px;">+56</div>
<div class="a c" style="right:826.8px;top:744.96px;">288,954</div>
<div class="a c k" style="right:709.8px;top:744.96px;">+1,355</div>
<div class="a c" style="right:623.8px;top:744.96px;">31,575</div>
<div class="a c" style="right:526.8px;top:744.96px;">1,411</div>
<div class="a c" style="right:415.8px;top:744.96px;">3,891</div>
<div class="a c" style="right:323.8px;top:744.96px;">102</div>
<div class="a c" style="right:220.8px;top:744.96px;">11,160,946</div>
<div class="a c" style="right:129.8px;top:744.96px;">131,954</div>
<div class="a c pop" style="right:13.8px;top:744.96px;">84,581,980</div>
<div class="a n" style="left:0;width:53px;text-align:center;top:785.60px;">16</div>
<div class="a c lk" style="left:49.5px;top:784.79px;">Bangladesh</div>
<div class="a c" style="right:1201.8px;top:784.12px;">373,151</div>
<div class="a c k" style="right:1119.8px;top:784.12px;">+1,520</div>
<div class="a c" style="right:1031.8px;top:784.12px;">5,440</div>
<div class="a c wh" style="right:943.8px;top:784.12px;">+35</div>
<div class="a c" style="right:826.8px;top:784.12px;">286,631</div>
<div class="a c k" style="right:709.8px;top:784.12px;">+1,798</div>
<div class="a c" style="right:623.8px;top:784.12px;">81,080</div>
<div class="a c" style="right:415.8px;top:784.12px;">2,260</div>
<div class="a c" style="right:323.8px;top:784.12px;">33</div>
<div class="a c" style="right:220.8px;top:784.12px;">2,026,808</div>
<div class="a c" style="right:129.8px;top:784.12px;">12,274</div>
<div class="a c pop" style="right:13.8px;top:784.12px;">165,129,131</div>
<div class="a n" style="left:0;width:53px;text-align:center;top:824.76px;">17</div>
<div class="a c lk" style="left:49.5px;top:823.95px;">Philippines</div>
<div class="a c" style="right:1201.8px;top:823.28px;">329,506</div>
<div class="a c k" style="right:1119.8px;top:823.28px;">+2,694</div>
<div class="a c" style="right:1031.8px;top:823.28px;">5,925</div>
<div class="a c wh" style="right:943.8px;top:823.28px;">+60</div>
<div class="a c" style="right:826.8px;top:823.28px;">273,621</div>
<div class="a c k" style="right:709.8px;top:823.28px;">+335</div>
<div class="a c" style="right:623.8px;top:823.28px;">49,960</div>
<div class="a c" style="right:526.8px;top:823.28px;">1,758</div>
<div class="a c" style="right:415.8px;top:823.28px;">2,996</div>
<div class="a c" style="right:323.8px;top:823.28px;">54</div>
<div class="a c" style="right:220.8px;top:823.28px;">3,979,197</div>
<div class="a c" style="right:129.8px;top:823.28px;">36,184</div>
<div class="a c pop" style="right:13.8px;top:823.28px;">109,969,812</div>
<div class="a n" style="left:0;width:53px;text-align:center;top:863.92px;">18</div>
<div class="a c lk" style="left:49.5px;top:863.11px;">Germany</div>
<div class="a c" style="right:1201.8px;top:862.44px;">311,113</div>
<div class="a c k" style="right:1119.8px;top:862.44px;">+3,994</div>
<div class="a c" style="right:1031.8px;top:862.44px;">9,652</div>
<div class="a c wh" style="right:943.8px;top:862.44px;">+17</div>
<div class="a c" style="right:826.8px;top:862.44px;">267,700</div>
<div class="a c k" style="right:709.8px;top:862.44px;">+2,100</div>
<div class="a c" style="right:623.8px;top:862.44px;">33,761</div>
<div class="a c" style="right:526.8px;top:862.44px;">470</div>
<div class="a c" style="right:415.8px;top:862.44px;">3,710</div>
<div class="a c" style="right:323.8px;top:862.44px;">115</div>
<div class="a c" style="right:220.8px;top:862.44px;">16,999,253</div>
<div class="a c" style="right:129.8px;top:862.44px;">202,718</div>
<div class="a c pop" style="right:13.8px;top:862.44px;">83,856,524</div>
<div class="a n" style="left:0;width:53px;text-align:center;top:903.08px;">19</div>
<div class="a c lk" style="left:49.5px;top:902.27px;">Indonesia</div>
<div class="a c" style="right:1201.8px;top:901.60px;">315,714</div>
<div class="a c k" style="right:1119.8px;top:901.60px;">+4,538</div>
<div class="a c" style="right:1031.8px;top:901.60px;">11,472</div>
<div class="a c wh" style="right:943.8px;top:901.60px;">+98</div>
<div class="a c" style="right:826.8px;top:901.60px;">240,291</div>
<div class="a c k" style="right:709.8px;top:901.60px;">+3,854</div>
<div class="a c" style="right:623.8px;top:901.60px;">63,951</div>
<div class="a c" style="right:415.8px;top:901.60px;">1,151</div>
<div class="a c" style="right:323.8px;top:901.60px;">42</div>
<div class="a c" style="right:220.8px;top:901.60px;">3,595,719</div>
<div class="a c" style="right:129.8px;top:901.60px;">13,109</div>
<div class="a c pop" style="right:13.8px;top:901.60px;">274,298,026</div>
<div class="a n" style="left:0;width:53px;text-align:center;top:942.24px;">20</div>
<div class="a c lk" style="left:49.5px;top:941.43px;">Italy</div>
<div class="a c" style="right:1201.8px;top:940.76px;">333,940</div>
<div class="a c k" style="right:1119.8px;top:940.76px;">+3,678</div>
<div class="a c" style="right:1031.8px;top:940.76px;">36,061</div>
<div class="a c wh" style="right:943.8px;top:940.76px;">+31</div>
<div class="a c" style="right:826.8px;top:940.76px;">235,303</div>
<div class="a c k" style="right:709.8px;top:940.76px;">+1,204</div>
<div class="a c" style="right:623.8px;top:940.76px;">62,576</div>
<div class="a c" style="right:526.8px;top:940.76px;">337</div>
<div class="a c" style="right:415.8px;top:940.76px;">5,525</div>
<div class="a c" style="right:323.8px;top:940.76px;">597</div>
<div class="a c" style="right:220.8px;top:940.76px;">12,069,402</div>
<div class="a c" style="right:129.8px;top:940.76px;">199,700</div>
<div class="a c pop" style="right:13.8px;top:940.76px;">60,437,566</div>
</body></html>
